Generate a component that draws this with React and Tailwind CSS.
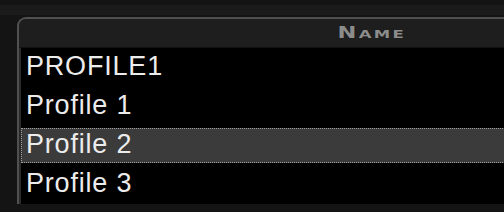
export default function App() {
  const rows = ["PROFILE1", "Profile 1", "Profile 2", "Profile 3"];
  const selected = 2;

  return (
    <div className="h-[212px] w-[504px] overflow-hidden bg-[#141414]">
      {/* top strip */}
      <div className="h-[17px] pt-[5px]">
        <div className="h-[10px] bg-[#1b1b1b]" />
      </div>

      <div className="flex pl-[17px]">
        {/* panel, runs off the right edge */}
        <div className="w-[708px] shrink-0 overflow-hidden rounded-tl-[9px] border-l-2 border-t-2 border-[#505050] bg-[#2a2a2a]">
          {/* header */}
          <div className="flex h-[29px] items-center justify-center border-b border-[#111] bg-[#1e1e1e]">
            <span className="inline-block scale-x-[1.5] font-['DejaVu_Sans',sans-serif] text-[15px] font-bold tracking-[1.5px] text-[#8c8c8c] [font-variant:small-caps]">
              Name
            </span>
          </div>

          {/* rows */}
          <div className="ml-[2px] bg-black font-['Liberation_Sans',Arial,sans-serif] text-[27px] tracking-[0.8px] text-[#ececec]">
            {rows.map((name, i) => (
              <div key={name} className="h-[39px] py-[2px]">
                <div
                  className={
                    i === selected
                      ? "h-[35px] border border-dotted border-[#a0a0a0] bg-[#3b3b3b] pl-[4px] leading-[31px]"
                      : "h-[35px] border border-transparent pl-[4px] leading-[31px]"
                  }
                >
                  {name}
                </div>
              </div>
            ))}
          </div>
        </div>
      </div>
    </div>
  );
}
